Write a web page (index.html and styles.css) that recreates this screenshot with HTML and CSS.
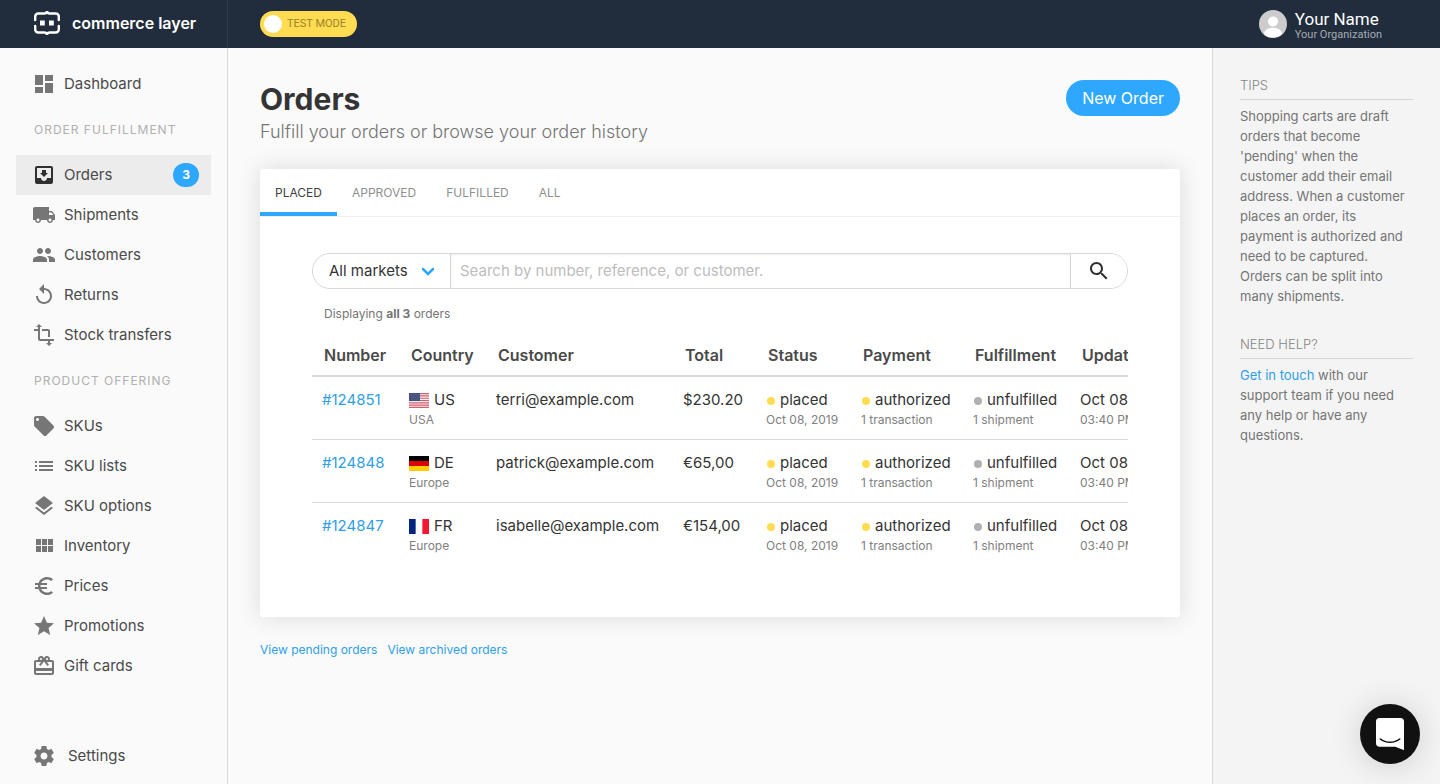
FILE: index.html
```html
<!DOCTYPE html>
<html lang="en">
<head>
<meta charset="utf-8">
<meta name="viewport" content="width=device-width, initial-scale=1">
<title>Orders - Commerce Layer</title>
<link rel="stylesheet" href="styles.css">
</head>
<body>
<div class="app">
  <header class="topbar">
    <a class="brand" href="#">
      <svg class="brand-logo" viewBox="0 0 26 26" aria-hidden="true"><path d="M1.200 10V6.500a3 3 0 0 1 3-3h6a2.800 2.800 0 0 0 2.800-2.300a2.800 2.800 0 0 0 2.800 2.300h6a3 3 0 0 1 3 3V10M1.200 16v3.500a3 3 0 0 0 3 3h6a2.800 2.800 0 0 1 2.800 2.300a2.800 2.800 0 0 1 2.800-2.300h6a3 3 0 0 0 3-3V16" fill="none" stroke="#fff" stroke-width="2.400" stroke-linecap="round"/><path d="M6 10.500h4.800v5H6zM15 10.500h4.800v5H15z" fill="#fff"/></svg>
      <span>commerce layer</span>
    </a>
    <div class="topbar-main">
      <label class="test-switch"><input type="checkbox" class="switch-input" checked><span>TEST MODE</span></label>
      <a class="profile" href="#">
        <svg class="avatar" viewBox="0 0 28 28" aria-hidden="true"><defs><clipPath id="avatar-clip"><circle cx="14" cy="14" r="14"/></clipPath></defs><g clip-path="url(#avatar-clip)"><path fill="#ccc" d="M0 0h28v28H0z"/><circle cx="14" cy="11.500" r="5" fill="#fff"/><path fill="#fff" d="M5 24c0-4 5-6.200 9-6.200s9 2.200 9 6.200c-2.500 2.400-5.500 3.400-9 3.400S7.500 26.400 5 24z"/></g></svg>
        <span class="profile-text"><span class="profile-name">Your Name</span><span class="profile-org">Your Organization</span></span>
      </a>
    </div>
  </header>

  <nav class="sidebar" aria-label="Main">
    <a class="nav-item" href="#"><svg class="icon" viewBox="0 0 24 24"><path d="M3 13h8V3H3v10zm0 8h8v-6H3v6zm10 0h8V11h-8v10zm0-18v6h8V3h-8z"/></svg>Dashboard</a>
    <h2 class="nav-heading">ORDER FULFILLMENT</h2>
    <a class="nav-item nav-item-active" href="#" aria-current="page"><svg class="icon" viewBox="0 0 24 24"><path d="M19 3H5c-1.100 0-2 .9-2 2v14c0 1.100.9 2 2 2h14c1.100 0 2-.9 2-2V5c0-1.100-.9-2-2-2zm0 12h-4c0 1.660-1.340 3-3 3s-3-1.340-3-3H5V5h14v10zm-3-5h-2V7h-4v3H8l4 4 4-4z"/></svg>Orders<span class="badge">3</span></a>
    <a class="nav-item" href="#"><svg class="icon" viewBox="0 0 24 24"><path d="M20 8h-3V4H3c-1.100 0-2 .9-2 2v11h2c0 1.660 1.340 3 3 3s3-1.340 3-3h6c0 1.660 1.340 3 3 3s3-1.340 3-3h2v-5l-3-4zM6 18.500c-.83 0-1.500-.67-1.500-1.500s.67-1.500 1.500-1.500 1.500.67 1.500 1.500-.67 1.500-1.500 1.500zm13.500-9l1.960 2.500H17V9.500h2.500zm-1.500 9c-.83 0-1.500-.67-1.500-1.500s.67-1.500 1.500-1.500 1.500.67 1.500 1.500-.67 1.500-1.500 1.500z"/></svg>Shipments</a>
    <a class="nav-item" href="#"><svg class="icon" viewBox="0 0 24 24"><path d="M16 11c1.660 0 2.990-1.340 2.990-3S17.660 5 16 5c-1.660 0-3 1.340-3 3s1.340 3 3 3zm-8 0c1.660 0 2.990-1.340 2.990-3S9.660 5 8 5C6.340 5 5 6.340 5 8s1.340 3 3 3zm0 2c-2.330 0-7 1.170-7 3.500V19h14v-2.500c0-2.330-4.670-3.500-7-3.500zm8 0c-.29 0-.62.02-.97.05 1.160.84 1.970 1.970 1.970 3.450V19h6v-2.500c0-2.330-4.670-3.500-7-3.500z"/></svg>Customers</a>
    <a class="nav-item" href="#"><svg class="icon" viewBox="0 0 24 24"><path d="M12 5V1L7 6l5 5V7c3.310 0 6 2.690 6 6s-2.690 6-6 6-6-2.690-6-6H4c0 4.420 3.580 8 8 8s8-3.580 8-8-3.580-8-8-8z"/></svg>Returns</a>
    <a class="nav-item" href="#"><svg class="icon" viewBox="0 0 24 24"><path d="M22 18v-2H8V4h2L7 1 4 4h2v2H2v2h4v8c0 1.100.9 2 2 2h8v2h-2l3 3 3-3h-2v-2h4zM10 8h6v6h2V8c0-1.100-.9-2-2-2h-6v2z"/></svg>Stock transfers</a>
    <h2 class="nav-heading">PRODUCT OFFERING</h2>
    <a class="nav-item" href="#"><svg class="icon" viewBox="0 0 24 24"><path d="M21.410 11.580l-9-9C12.050 2.220 11.550 2 11 2H4c-1.100 0-2 .9-2 2v7c0 .55.22 1.050.59 1.420l9 9c.36.360.86.580 1.410.58.550 0 1.050-.22 1.410-.59l7-7c.37-.36.59-.86.59-1.410 0-.55-.23-1.060-.59-1.420zM5.500 7C4.670 7 4 6.330 4 5.500S4.670 4 5.500 4 7 4.670 7 5.500 6.330 7 5.500 7z"/></svg>SKUs</a>
    <a class="nav-item" href="#"><svg class="icon" viewBox="0 0 24 24"><path d="M3 13h2v-2H3v2zm0 4h2v-2H3v2zm0-8h2V7H3v2zm4 4h14v-2H7v2zm0 4h14v-2H7v2zM7 7v2h14V7H7z"/></svg>SKU lists</a>
    <a class="nav-item" href="#"><svg class="icon" viewBox="0 0 24 24"><path d="M11.990 18.540l-7.370-5.730L3 14.070l9 7 9-7-1.630-1.270-7.380 5.740zM12 16l7.360-5.730L21 9l-9-7-9 7 1.630 1.270L12 16z"/></svg>SKU options</a>
    <a class="nav-item" href="#"><svg class="icon" viewBox="0 0 24 24"><path d="M4 11h5V5H4v6zm0 7h5v-6H4v6zm6 0h5v-6h-5v6zm6 0h5v-6h-5v6zm-6-7h5V5h-5v6zm6-6v6h5V5h-5z"/></svg>Inventory</a>
    <a class="nav-item" href="#"><svg class="icon" viewBox="0 0 24 24"><path d="M15 18.500c-2.510 0-4.680-1.420-5.760-3.500H15v-2H8.580c-.05-.33-.08-.66-.08-1s.03-.67.080-1H15V9H9.240C10.320 6.920 12.500 5.500 15 5.500c1.610 0 3.090.59 4.230 1.570L21 5.300C19.410 3.870 17.300 3 15 3c-3.920 0-7.240 2.510-8.480 6H3v2h3.060c-.04.33-.06.66-.06 1s.02.67.060 1H3v2h3.520c1.240 3.490 4.560 6 8.480 6 2.310 0 4.410-.87 6-2.300l-1.780-1.770c-1.130.98-2.600 1.570-4.220 1.570z"/></svg>Prices</a>
    <a class="nav-item" href="#"><svg class="icon" viewBox="0 0 24 24"><path d="M12 17.270L18.180 21l-1.640-7.030L22 9.240l-7.190-.61L12 2 9.190 8.630 2 9.240l5.460 4.730L5.820 21z"/></svg>Promotions</a>
    <a class="nav-item" href="#"><svg class="icon" viewBox="0 0 24 24"><path d="M20 6h-2.180c.11-.31.18-.65.18-1 0-1.660-1.340-3-3-3-1.050 0-1.960.54-2.500 1.350l-.5.670-.5-.68C10.960 2.540 10.050 2 9 2 7.340 2 6 3.340 6 5c0 .35.070.69.180 1H4c-1.110 0-1.990.89-1.990 2L2 19c0 1.110.89 2 2 2h16c1.110 0 2-.89 2-2V8c0-1.110-.89-2-2-2zm-5-2c.55 0 1 .45 1 1s-.45 1-1 1-1-.45-1-1 .45-1 1-1zM9 4c.55 0 1 .45 1 1s-.45 1-1 1-1-.45-1-1 .45-1 1-1zm11 15H4v-2h16v2zm0-5H4V8h5.080L7 10.830 8.620 12 11 8.760l1-1.360 1 1.360L15.380 12 17 10.830 14.920 8H20v6z"/></svg>Gift cards</a>
    <a class="nav-item nav-item-settings" href="#"><svg class="icon" viewBox="0 0 24 24"><path d="M19.430 12.980c.04-.32.07-.64.07-.98s-.03-.66-.07-.98l2.110-1.650c.19-.15.24-.42.12-.64l-2-3.460c-.12-.22-.39-.3-.61-.22l-2.490 1c-.52-.4-1.080-.73-1.690-.98l-.38-2.650C14.460 2.180 14.250 2 14 2h-4c-.25 0-.46.18-.49.42l-.38 2.650c-.61.25-1.170.59-1.690.98l-2.490-1c-.23-.09-.49 0-.61.22l-2 3.460c-.13.22-.07.49.12.64l2.110 1.650c-.04.32-.07.65-.07.98s.03.66.07.98l-2.110 1.650c-.19.15-.24.42-.12.64l2 3.460c.12.22.39.3.61.22l2.490-1c.52.400 1.080.730 1.690.98l.38 2.650c.03.24.24.42.49.42h4c.25 0 .46-.18.49-.42l.38-2.650c.61-.25 1.170-.59 1.690-.98l2.490 1c.23.090.49 0 .61-.22l2-3.460c.12-.22.07-.49-.12-.64l-2.110-1.650zM12 15.500c-1.930 0-3.500-1.570-3.500-3.500s1.570-3.500 3.500-3.500 3.500 1.570 3.500 3.500-1.570 3.500-3.500 3.500z"/></svg>Settings</a>
  </nav>

  <main class="content">
    <div class="page-head">
      <div>
        <h1 class="page-title">Orders</h1>
        <p class="page-subtitle">Fulfill your orders or browse your order history</p>
      </div>
      <button class="primary-button" type="button">New Order</button>
    </div>

    <section class="card">
      <div class="tabs">
        <a class="tab tab-active" href="#">PLACED</a>
        <a class="tab" href="#">APPROVED</a>
        <a class="tab" href="#">FULFILLED</a>
        <a class="tab" href="#">ALL</a>
      </div>
      <div class="card-body">
        <form class="search">
          <div class="market">
            <select class="market-select" aria-label="Market"><option>All markets</option></select>
            <svg class="market-arrow" viewBox="0 0 14 10" aria-hidden="true"><path d="M2 2l5 5 5-5" fill="none" stroke="#2ea8ff" stroke-width="2.500" stroke-linecap="round"/></svg>
          </div>
          <input class="search-input" type="text" aria-label="Search orders" placeholder="Search by number, reference, or customer.">
          <button class="search-button" type="button" aria-label="Search"><svg class="icon" viewBox="0 0 24 24"><path d="M15.500 14h-.79l-.28-.27C15.410 12.590 16 11.110 16 9.500 16 5.910 13.090 3 9.500 3S3 5.910 3 9.500 5.910 16 9.500 16c1.610 0 3.090-.59 4.230-1.570l.27.28v.79l5 4.990L20.490 19l-4.990-5zm-6 0C7.010 14 5 11.990 5 9.500S7.010 5 9.500 5 14 7.010 14 9.500 11.990 14 9.500 14z"/></svg></button>
        </form>
        <p class="summary">Displaying <strong>all 3</strong> orders</p>
        <div class="table-wrap">
          <table class="orders">
            <colgroup><col class="col-number"><col class="col-country"><col class="col-customer"><col class="col-total"><col class="col-status"><col class="col-payment"><col class="col-fulfillment"><col class="col-updated"></colgroup>
            <thead>
              <tr><th>Number</th><th>Country</th><th>Customer</th><th>Total</th><th>Status</th><th>Payment</th><th>Fulfillment</th><th>Updated</th></tr>
            </thead>
            <tbody>
              <tr>
                <td><a href="#">#124851</a></td>
                <td><svg class="flag" viewBox="0 0 20 15" aria-hidden="true"><path fill="#f6eef0" d="M0 0h20v15H0z"/><path stroke="#d0606c" stroke-width="1.150" d="M0 .6h20M0 2.900h20M0 5.200h20M0 7.500h20M0 9.800h20M0 12.100h20M0 14.400h20"/><path fill="#414d7c" d="M0 0h11v8H0z"/><path stroke="#8e96b4" stroke-width=".6" stroke-dasharray=".6 1.200" d="M1 1.500h10M1.900 3.100h9M1 4.700h10M1.900 6.300h9"/></svg>US<small>USA</small></td>
                <td>terri@example.com</td>
                <td>$230.20</td>
                <td><i class="dot dot-yellow"></i>placed<small>Oct 08, 2019</small></td>
                <td><i class="dot dot-yellow"></i>authorized<small>1 transaction</small></td>
                <td><i class="dot dot-gray"></i>unfulfilled<small>1 shipment</small></td>
                <td>Oct 08, 2019<small>03:40 PM</small></td>
              </tr>
              <tr>
                <td><a href="#">#124848</a></td>
                <td><svg class="flag" viewBox="0 0 20 15" aria-hidden="true"><path d="M0 0h20v5H0z"/><path fill="#d00" d="M0 5h20v5H0z"/><path fill="#ffce00" d="M0 10h20v5H0z"/></svg>DE<small>Europe</small></td>
                <td>patrick@example.com</td>
                <td>€65,00</td>
                <td><i class="dot dot-yellow"></i>placed<small>Oct 08, 2019</small></td>
                <td><i class="dot dot-yellow"></i>authorized<small>1 transaction</small></td>
                <td><i class="dot dot-gray"></i>unfulfilled<small>1 shipment</small></td>
                <td>Oct 08, 2019<small>03:40 PM</small></td>
              </tr>
              <tr>
                <td><a href="#">#124847</a></td>
                <td><svg class="flag" viewBox="0 0 20 15" aria-hidden="true"><path fill="#fff" d="M0 0h20v15H0z"/><path fill="#00267f" d="M0 0h6.670v15H0z"/><path fill="#f31830" d="M13.330 0H20v15h-6.670z"/></svg>FR<small>Europe</small></td>
                <td>isabelle@example.com</td>
                <td>€154,00</td>
                <td><i class="dot dot-yellow"></i>placed<small>Oct 08, 2019</small></td>
                <td><i class="dot dot-yellow"></i>authorized<small>1 transaction</small></td>
                <td><i class="dot dot-gray"></i>unfulfilled<small>1 shipment</small></td>
                <td>Oct 08, 2019<small>03:40 PM</small></td>
              </tr>
            </tbody>
          </table>
        </div>
      </div>
    </section>

    <div class="more-links"><a href="#">View pending orders</a><a href="#">View archived orders</a></div>
  </main>

  <aside class="help">
    <section class="help-block">
      <h2 class="help-title">TIPS</h2>
      <p>Shopping carts are draft orders that become 'pending' when the customer add their email address. When a customer places an order, its payment is authorized and need to be captured. Orders can be split into many shipments.</p>
    </section>
    <section class="help-block">
      <h2 class="help-title">NEED HELP?</h2>
      <p><a href="#">Get in touch</a> with our support team if you need any help or have any questions.</p>
    </section>
  </aside>
</div>
<button class="chat-button" type="button" aria-label="Open chat"><svg class="chat-icon" viewBox="0 0 28 32" aria-hidden="true"><path fill="#fff" d="M28 32s-4.700-1.800-8.900-3.300H3.400c-1.900 0-3.400-1.400-3.400-3.200V3.200C0 1.400 1.500 0 3.400 0h21.200C26.500 0 28 1.400 28 3.200V32z"/><path fill="none" stroke="#111" stroke-width="1.600" stroke-linecap="round" d="M4.300 21c5.400 4.400 14 4.400 19.400 0"/></svg></button>
</body>
</html>
```

FILE: styles.css
```css
* {
  box-sizing: border-box;
}

body {
  margin: 0;
  background: #fafafa;
  color: #343434;
  font-family: Inter, "Liberation Sans", sans-serif;
  font-size: 15px;
  line-height: 20px;
}

h1,
h2,
p {
  margin: 0;
}

a {
  color: #2f9fe6;
  text-decoration: none;
}

button,
input,
select {
  font: inherit;
}

.app {
  display: grid;
  grid-template-columns: 228px minmax(0, 1fr) 228px;
  grid-template-rows: 48px 1fr;
  min-height: 100vh;
}

.topbar {
  grid-column: 1 / -1;
  display: flex;
  background: #212d3d;
  color: #fff;
}

.brand {
  display: flex;
  align-items: center;
  gap: 12px;
  width: 228px;
  padding: 0 0 2px 34px;
  border-right: 1px solid #2e3a49;
  color: #fff;
  font-size: 16px;
  font-weight: 600;
}

.brand-logo {
  width: 26px;
  height: 26px;
}

.topbar-main {
  flex: 1;
  display: flex;
  align-items: center;
  justify-content: space-between;
  padding: 0 58px 0 32px;
}

.test-switch {
  display: flex;
  align-items: center;
  gap: 5px;
  height: 26px;
  padding: 0 11px 0 4px;
  border-radius: 13px;
  background: #ffdc52;
  color: #9b8328;
  font-family: Roboto, sans-serif;
  font-size: 11px;
}

.switch-input {
  appearance: none;
  width: 18px;
  height: 18px;
  margin: 0;
  border-radius: 50%;
  background: #fff;
}

.profile {
  display: flex;
  align-items: center;
  gap: 8px;
  color: #fff;
  font-family: Roboto, sans-serif;
}

.avatar {
  width: 28px;
  height: 28px;
}

.profile-text {
  display: flex;
  flex-direction: column;
  padding-top: 2px;
}

.profile-name {
  font-size: 17px;
  line-height: 18px;
}

.profile-org {
  color: #a6abb1;
  font-size: 11px;
  line-height: 13px;
}

.sidebar {
  display: flex;
  flex-direction: column;
  padding: 16px 16px 8px;
  border-right: 1px solid #d9d9d9;
}

.nav-item {
  display: flex;
  align-items: center;
  gap: 8px;
  height: 40px;
  padding: 0 12px 0 16px;
  color: #4a4a4a;
}

.nav-item-active {
  background: #ececec;
}

.nav-item-settings {
  gap: 12px;
  margin-top: auto;
}

.icon {
  flex: none;
  width: 24px;
  height: 24px;
  fill: #767676;
}

.nav-item-active .icon,
.search-button .icon {
  fill: #303030;
}

.badge {
  width: 26px;
  margin-left: auto;
  border-radius: 12px;
  background: #2ea8ff;
  color: #fff;
  font-size: 12px;
  font-weight: 700;
  line-height: 24px;
  text-align: center;
}

.nav-heading {
  padding-left: 18px;
  color: #b0b0b0;
  font-size: 12px;
  font-weight: 400;
  letter-spacing: 1px;
  line-height: 51px;
}

.content {
  padding: 32px;
}

.page-head {
  display: flex;
  align-items: flex-start;
  justify-content: space-between;
  margin-bottom: 23px;
}

.page-title {
  font-size: 30px;
  font-weight: 700;
  line-height: 38px;
}

.page-subtitle {
  color: #757575;
  font-size: 18px;
  font-weight: 300;
  line-height: 28px;
}

.primary-button {
  height: 36px;
  padding: 0 16px;
  border: 0;
  border-radius: 18px;
  background: #2ea8ff;
  color: #fff;
  font-size: 16px;
}

.card {
  border-radius: 3px;
  background: #fff;
  box-shadow: 0 0 24px rgba(0, 0, 0, 0.13);
}

.tabs {
  display: flex;
  height: 48px;
  border-bottom: 1px solid #efefef;
}

.tab {
  padding: 0 15px;
  color: #909090;
  font-size: 12px;
  line-height: 47px;
}

.tab-active {
  border-bottom: 4px solid #2ea8ff;
  color: #404040;
}

.card-body {
  padding: 36px 52px 52px;
}

.search {
  display: flex;
  height: 36px;
  border: 1px solid #d8d8d8;
  border-radius: 18px;
  overflow: hidden;
}

.market {
  position: relative;
}

.market-select {
  appearance: none;
  width: 137px;
  height: 100%;
  padding: 0 32px 0 16px;
  border: 0;
  background: transparent;
  color: #343434;
}

.market-arrow {
  position: absolute;
  top: 13px;
  right: 15px;
  width: 14px;
  height: 10px;
  pointer-events: none;
}

.search-input {
  flex: 1;
  min-width: 0;
  padding: 0 9px;
  border: solid #d8d8d8;
  border-width: 0 1px;
  background: #fff;
  box-shadow: inset 0 1px 2px rgba(0, 0, 0, 0.08);
}

.search-input::placeholder {
  color: #bdbdbd;
}

.search-button {
  width: 56px;
  padding: 0;
  border: 0;
  background: #fff;
  line-height: 0;
}

.summary {
  padding: 15px 12px 11px;
  color: #757575;
  font-size: 12px;
}

.table-wrap {
  overflow: hidden;
}

.orders {
  width: 100%;
  min-width: 868px;
  border-collapse: collapse;
  table-layout: fixed;
}

.col-number,
.col-country {
  width: 87px;
}

.col-customer {
  width: 187px;
}

.col-total {
  width: 83px;
}

.col-status {
  width: 95px;
}

.col-payment {
  width: 112px;
}

.col-fulfillment {
  width: 107px;
}

.orders th {
  height: 41px;
  padding: 0 12px;
  border-bottom: 2px solid #d9d9d9;
  color: #4a4a4a;
  font-size: 16px;
  font-weight: 600;
  text-align: left;
  white-space: nowrap;
}

.orders td {
  height: 63px;
  padding: 13px 10px 0;
  border-bottom: 1px solid #d9d9d9;
  white-space: nowrap;
  vertical-align: top;
}

.orders tr:last-child td {
  border-bottom: 0;
}

.orders small {
  display: block;
  color: #808080;
  font-size: 12px;
}

.flag {
  width: 20px;
  height: 15px;
  margin-right: 5px;
  vertical-align: -3px;
}

.dot {
  display: inline-block;
  width: 8px;
  height: 8px;
  margin: 0 5px 0 1px;
  border-radius: 50%;
}

.dot-yellow {
  background: #ffdc52;
}

.dot-gray {
  background: #b0b0b0;
}

.more-links {
  display: flex;
  gap: 10px;
  margin-top: 23px;
  font-size: 12px;
}

.help {
  padding: 27px 27px 0;
  border-left: 1px solid #d9d9d9;
  background: #f4f4f4;
  color: #757575;
  font-size: 13px;
}

.help-block {
  margin-bottom: 28px;
}

.help-title {
  margin-bottom: 6px;
  padding-bottom: 4px;
  border-bottom: 1px solid #d6d6d6;
  color: #858585;
  font-size: 13px;
  font-weight: 300;
}

.chat-button {
  position: fixed;
  right: 20px;
  bottom: 20px;
  display: grid;
  place-items: center;
  width: 60px;
  height: 60px;
  padding: 0;
  border: 0;
  border-radius: 50%;
  background: #111;
  box-shadow: 0 2px 32px rgba(0, 0, 0, 0.16);
}

.chat-icon {
  width: 28px;
  height: 32px;
}
```
